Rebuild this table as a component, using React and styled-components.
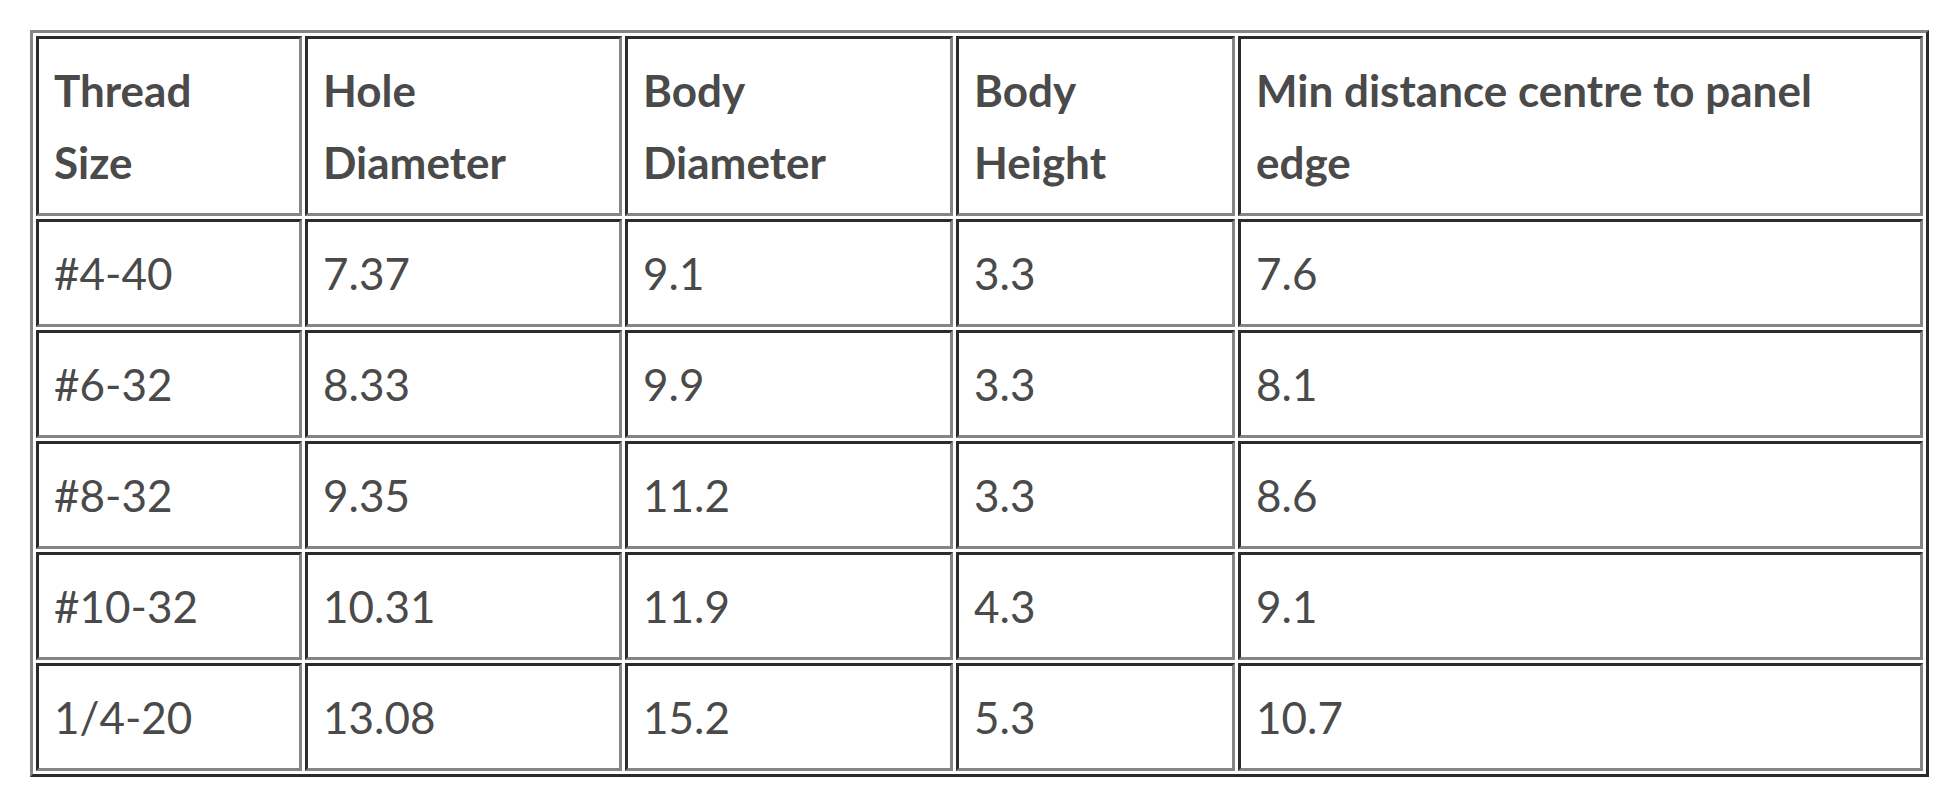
import React from "react";
import styled, { createGlobalStyle } from "styled-components";

const GlobalStyle = createGlobalStyle`
  body {
    margin: 0;
    background: #ffffff;
    font-family: "Lato", "Open Sans", sans-serif;
    color: #4a4a4a;
  }
`;

const Page = styled.div`
  padding: 30px 0 0 30px;
`;

const Table = styled.table`
  width: 1897px;
  table-layout: fixed;
  border-spacing: 3px;
  border-width: 3px;
  border-style: solid;
  border-color: #858585 #2b2b2b #2b2b2b #858585;
`;

const cell = `
  box-sizing: border-box;
  border-width: 3px;
  border-style: solid;
  border-color: #2b2b2b #858585 #858585 #2b2b2b;
  padding: 15px;
  text-align: left;
  vertical-align: middle;
  font-size: 44px;
  line-height: 72px;
  color: #4a4a4a;
`;

const Head = styled.th`
  ${cell}
  font-weight: 700;
  width: ${(p) => p.$w}px;
`;

const Cell = styled.td`
  ${cell}
  font-weight: 400;
`;

const columns = [
  { label: ["Thread", "Size"], w: 266 },
  { label: ["Hole", "Diameter"], w: 317 },
  { label: ["Body", "Diameter"], w: 328 },
  { label: ["Body", "Height"], w: 279 },
  { label: ["Min distance centre to panel", "edge"], w: 685 },
];

const rows = [
  ["#4-40", "7.37", "9.1", "3.3", "7.6"],
  ["#6-32", "8.33", "9.9", "3.3", "8.1"],
  ["#8-32", "9.35", "11.2", "3.3", "8.6"],
  ["#10-32", "10.31", "11.9", "4.3", "9.1"],
  ["1/4-20", "13.08", "15.2", "5.3", "10.7"],
];

export default function App() {
  return (
    <>
      <GlobalStyle />
      <Page>
        <Table>
          <thead>
            <tr>
              {columns.map((c) => (
                <Head key={c.label.join(" ")} $w={c.w}>
                  {c.label[0]}
                  <br />
                  {c.label[1]}
                </Head>
              ))}
            </tr>
          </thead>
          <tbody>
            {rows.map((r) => (
              <tr key={r[0]}>
                {r.map((v, i) => (
                  <Cell key={i}>{v}</Cell>
                ))}
              </tr>
            ))}
          </tbody>
        </Table>
      </Page>
    </>
  );
}
